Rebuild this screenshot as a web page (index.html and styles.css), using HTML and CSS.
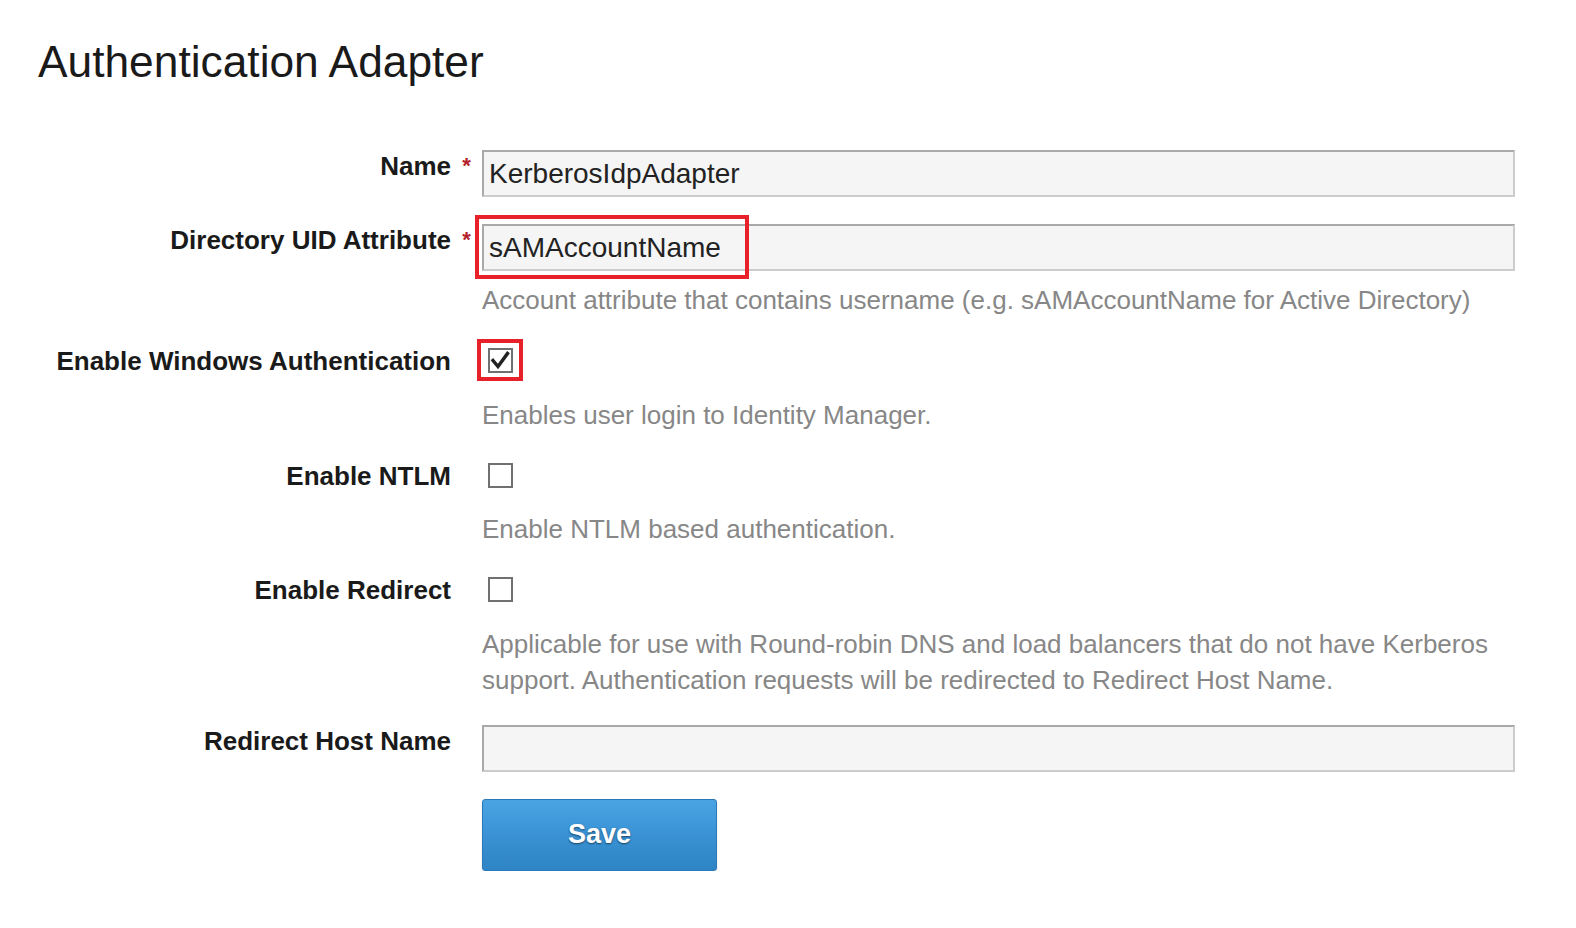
FILE: index.html
```html
<!DOCTYPE html>
<html lang="en">
<head>
<meta charset="utf-8">
<title>Authentication Adapter</title>
<link rel="stylesheet" href="styles.css">
</head>
<body>
<div class="page">
  <h1 class="title">Authentication Adapter</h1>
  <form class="form">
    <div class="row">
      <label class="label">Name</label>
      <span class="req">*</span>
      <div class="control">
        <input class="text-input" type="text" value="KerberosIdpAdapter">
      </div>
    </div>
    <div class="row">
      <label class="label">Directory UID Attribute</label>
      <span class="req">*</span>
      <div class="control">
        <div class="input-wrap">
          <input class="text-input" type="text" value="sAMAccountName">
          <span class="highlight highlight-input"></span>
        </div>
        <p class="help">Account attribute that contains username (e.g. sAMAccountName for Active Directory)</p>
      </div>
    </div>
    <div class="row">
      <label class="label">Enable Windows Authentication</label>
      <span class="req"></span>
      <div class="control">
        <div class="check-wrap">
          <span class="checkbox checked">
            <svg width="25" height="25" viewBox="0 0 25 25"><path d="M5 12.5 L10 18.5 L19.5 5.5" fill="none" stroke="#222" stroke-width="3.4" stroke-linecap="square" stroke-linejoin="miter"/></svg>
            <span class="highlight highlight-check"></span>
          </span>
        </div>
        <p class="help">Enables user login to Identity Manager.</p>
      </div>
    </div>
    <div class="row">
      <label class="label">Enable NTLM</label>
      <span class="req"></span>
      <div class="control">
        <div class="check-wrap">
          <span class="checkbox"></span>
        </div>
        <p class="help">Enable NTLM based authentication.</p>
      </div>
    </div>
    <div class="row">
      <label class="label">Enable Redirect</label>
      <span class="req"></span>
      <div class="control">
        <div class="check-wrap">
          <span class="checkbox"></span>
        </div>
        <p class="help">Applicable for use with Round-robin DNS and load balancers that do not have Kerberos support. Authentication requests will be redirected to Redirect Host Name.</p>
      </div>
    </div>
    <div class="row">
      <label class="label">Redirect Host Name</label>
      <span class="req"></span>
      <div class="control">
        <input class="text-input" type="text" value="">
      </div>
    </div>
    <div class="row">
      <span class="label"></span>
      <span class="req"></span>
      <div class="control">
        <button class="save-btn" type="button">Save</button>
      </div>
    </div>
  </form>
</div>
</body>
</html>
```

FILE: styles.css
```css
html, body {
  margin: 0;
  padding: 0;
  background: #ffffff;
}

body {
  font-family: "Liberation Sans", Arial, sans-serif;
  color: #1a1a1a;
}

.page {
  padding: 36px 61px 0 38px;
}

.title {
  margin: 0 0 62px 0;
  font-size: 44.3px;
  line-height: 52px;
  font-weight: normal;
  color: #1a1a1a;
}

.form {
  display: flex;
  flex-direction: column;
  gap: 27px;
}

.row {
  display: flex;
  align-items: flex-start;
}

.label {
  width: 413px;
  flex: none;
  text-align: right;
  font-size: 26px;
  font-weight: bold;
  line-height: 30px;
  padding-top: 1px;
  color: #1a1a1a;
}

.req {
  width: 31px;
  flex: none;
  text-align: center;
  color: #b3212c;
  font-size: 22px;
  font-weight: bold;
  line-height: 30px;
  padding-top: 1px;
}

.control {
  flex: 1;
  min-width: 0;
}

.input-wrap {
  position: relative;
}

.text-input {
  display: block;
  box-sizing: border-box;
  width: 100%;
  height: 47px;
  margin: 0;
  padding: 0 5px;
  border-style: solid;
  border-width: 2px;
  border-color: #a9a9a9 #cccccc #cccccc #a9a9a9;
  background: #f5f5f5;
  font-family: "Liberation Sans", Arial, sans-serif;
  font-size: 28px;
  color: #222222;
  outline: none;
}

.highlight {
  position: absolute;
  box-sizing: border-box;
  border: 4px solid #e8202a;
  pointer-events: none;
}

.highlight-input {
  left: -7px;
  top: -9px;
  width: 274px;
  height: 64px;
}

.check-wrap {
  box-sizing: border-box;
  height: 40.5px;
  padding: 3px 0 0 6px;
}

.checkbox {
  position: relative;
  display: block;
  box-sizing: border-box;
  width: 25px;
  height: 25px;
  border: 2px solid #707070;
  background: #ffffff;
}

.checkbox svg {
  position: absolute;
  left: -2px;
  top: -2px;
}

.highlight-check {
  left: -13px;
  top: -11px;
  width: 46px;
  height: 42px;
}

.help {
  margin: 11px 0 0 0;
  font-size: 26px;
  line-height: 36px;
  color: #878787;
}

.save-btn {
  display: block;
  box-sizing: border-box;
  width: 235px;
  height: 72px;
  margin: 0;
  padding: 0;
  border: 1px solid #2a78b8;
  border-radius: 3px;
  background: linear-gradient(to bottom, #4aa4e3 0%, #3a92d4 50%, #2e84c4 100%);
  box-shadow: 0 2px 2px rgba(0, 0, 0, 0.12);
  color: #ffffff;
  font-family: "Liberation Sans", Arial, sans-serif;
  font-size: 27px;
  font-weight: bold;
  text-shadow: 0 1px 2px rgba(0, 0, 0, 0.55);
  cursor: pointer;
}
```
